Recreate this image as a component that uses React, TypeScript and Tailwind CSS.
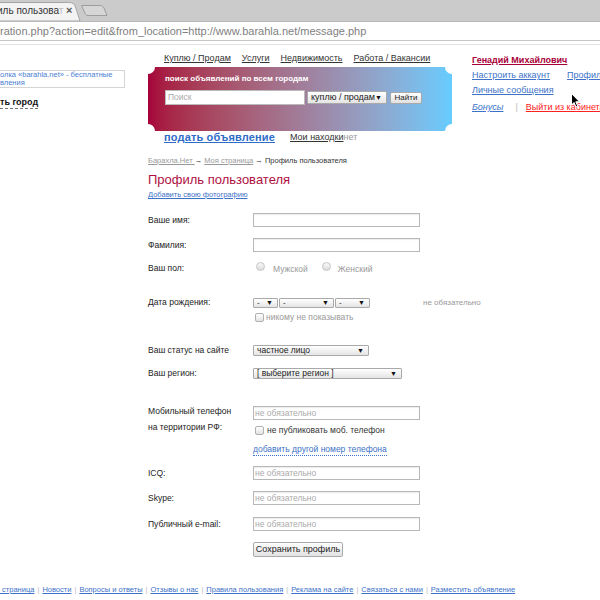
import React from "react";

function Sel({ cls, text }: { cls: string; text: string }) {
  return (
    <div
      className={`flex items-center justify-between whitespace-nowrap border border-[#a9a9a9] rounded-[1px] bg-linear-to-b from-white to-[#e4e4e4] pl-[3px] pr-[4px] leading-none text-[#222] ${cls}`}
    >
      <span>{text}</span>
      <span className="text-[7px] text-[#111]">▼</span>
    </div>
  );
}

function Inp({ ph }: { ph?: string }) {
  return (
    <div className="w-[167px] h-[14px] border border-[#b8b8b8] bg-white shadow-[inset_0_1px_1px_rgba(0,0,0,0.08)] flex items-center pl-[1px] text-[8.5px] leading-none text-[#aaa] whitespace-nowrap">
      {ph}
    </div>
  );
}

function Radio() {
  return <span className="inline-block w-[9px] h-[9px] rounded-full border border-[#c4c4c4] bg-linear-to-b from-[#fafafa] to-[#dcdcdc]" />;
}

function Check() {
  return <span className="inline-block w-[9px] h-[9px] rounded-[2px] border border-[#b0b0b0] bg-linear-to-b from-white to-[#e2e2e2]" />;
}

export default function App() {
  const footer = [
    "Новости",
    "Вопросы и ответы",
    "Отзывы о нас",
    "Правила пользования",
    "Реклама на сайте",
    "Связаться с нами",
    "Разместить объявление",
  ];
  return (
    <div className="relative w-[600px] h-[600px] overflow-hidden bg-white font-['Liberation_Sans',Arial,sans-serif] text-[#222]">
      {/* browser chrome */}
      <div className="relative h-[21px] bg-[#cbcbcb]">
        <svg className="absolute left-0 top-0" width="112" height="21" viewBox="0 0 112 21">
          <path d="M-2 2.5 H69 C73 2.5 74.5 4 75.5 7 L80 21 H-2 Z" fill="#f3f3f3" stroke="#a6a6a6" />
          <path d="M81.5 5.5 H100 C102 5.5 103 6.5 104 8 L107 15.5 H88 C86.5 15.5 85.5 14.5 85 13.5 Z" fill="#d6d6d6" stroke="#9d9d9d" />
        </svg>
        <div className="absolute left-[-3px] top-[5px] text-[10px] leading-[12px] text-[#333] whitespace-nowrap">
          иль пользова<span className="text-[#bbb]">т</span>
        </div>
        <div className="absolute left-[66px] top-[4px] text-[11px] leading-[12px] font-bold text-[#555]">×</div>
      </div>
      <div className="h-[24px] bg-white border-t border-[#b9b9b9] border-b border-b-[#e2e2e2]">
        <div className="h-[19px] border-b border-[#c6c6c6] flex items-center text-[11px] leading-none text-[#808080] whitespace-nowrap">
          ration.php?action=edit&amp;from_location=http://www.barahla.net/message.php
        </div>
      </div>

      {/* header */}
      <div className="flex">
        <div className="w-[148px] shrink-0">
          <div className="mt-[25px] w-[125px] h-[18px] border border-l-0 border-[#d4d4d4] text-[7.5px] leading-[8px] text-[#4a80d4] whitespace-nowrap">
            <div>олка «barahla.net» - бесплатные</div>
            <div>вления</div>
          </div>
          <div className="mt-[6px] inline-block text-[9px] leading-[11px] font-bold text-[#111] border-b border-dashed border-[#777] whitespace-nowrap">
            ть город
          </div>
        </div>

        <div className="w-[312px] shrink-0">
          <div className="mt-[7px] pl-[16px] flex gap-[11px] text-[9px] leading-[12px] text-[#333] whitespace-nowrap">
            <span className="underline">Куплю / Продам</span>
            <span className="underline">Услуги</span>
            <span className="underline">Недвижимость</span>
            <span className="underline">Работа / Вакансии</span>
          </div>
          <div className="relative mt-[3px] w-[304px] h-[64px] bg-linear-to-r from-[#a6003a] to-[#66ccff]">
            <span className="absolute -left-[7px] -top-[7px] w-[14px] h-[14px] rounded-full bg-white" />
            <span className="absolute -right-[7px] -top-[7px] w-[14px] h-[14px] rounded-full bg-white" />
            <span className="absolute -left-[7px] -bottom-[7px] w-[14px] h-[14px] rounded-full bg-white" />
            <span className="absolute -right-[7px] -bottom-[7px] w-[14px] h-[14px] rounded-full bg-white" />
            <div className="pl-[17px] pt-[6px]">
              <div className="text-[8px] leading-[12px] font-bold text-white whitespace-nowrap">поиск объявлений по всем городам</div>
              <div className="mt-[5px] flex items-start">
                <div className="w-[140px] h-[15px] bg-white border border-[#bbb] flex items-center pl-[2px] text-[8.5px] leading-none text-[#aaa]">
                  Поиск
                </div>
                <Sel cls="ml-[2px] mt-[1px] w-[80px] h-[13px] text-[9px]" text="куплю / продам" />
                <div className="ml-[3px] mt-[2px] w-[32px] h-[12px] border border-[#a9a9a9] rounded-[2px] bg-linear-to-b from-white to-[#e0e0e0] flex items-center justify-center text-[8px] leading-none text-[#222]">
                  Найти
                </div>
              </div>
            </div>
          </div>
          <div className="flex items-center h-[12px] pl-[16px] whitespace-nowrap">
            <span className="inline-block w-[126px] text-[11px] tracking-[0.15px] leading-[12px] font-bold text-[#2f6cc8] underline">подать объявление</span>
            <span className="text-[9px] leading-[12px] text-[#333] underline">Мои находки</span>
            <span className="text-[9px] leading-[12px] text-[#999]">нет</span>
          </div>
        </div>

        <div className="ml-[12px] text-[9px] leading-[15px] whitespace-nowrap">
          <div className="mt-[8px] font-bold text-[#a8003a] underline">Генадий Михайлович</div>
          <div className="flex gap-[17px] text-[#3d72c8]">
            <span className="underline">Настроить аккаунт</span>
            <span className="underline">Профиль</span>
          </div>
          <div className="text-[#3d72c8] underline">Личные сообщения</div>
          <div className="mt-[2px] flex items-center">
            <span className="italic text-[#3d72c8] underline">Бонусы</span>
            <span className="ml-[12px] text-[#bbb]">|</span>
            <span className="ml-[8px] text-[#ff2020] underline">Выйти из кабинета</span>
          </div>
        </div>
      </div>

      {/* main */}
      <div className="pl-[148px]">
        <div className="mt-[13px] text-[7.5px] leading-[10px] whitespace-nowrap text-[#333]">
          <span className="text-[#999] underline">Барахла.Нет </span> → <span className="text-[#999] underline">Моя страница</span> → Профиль пользователя
        </div>
        <div className="mt-[6px] text-[13px] leading-[16px] text-[#b0103f]">Профиль пользователя</div>
        <div className="mt-[2px] text-[7.5px] leading-[10px] text-[#3d72c8] underline">Добавить свою фотографию</div>

        <div className="flex flex-col text-[8.5px] text-[#222] whitespace-nowrap">
          <div className="mt-[13px] flex items-center h-[14px]">
            <div className="w-[105px]">Ваше имя:</div>
            <Inp />
          </div>
          <div className="mt-[11px] flex items-center h-[14px]">
            <div className="w-[105px]">Фамилия:</div>
            <Inp />
          </div>
          <div className="mt-[9px] flex items-center h-[14px]">
            <div className="w-[105px]">Ваш пол:</div>
            <div className="flex items-center text-[#999]">
              <span className="ml-[3px]"><Radio /></span>
              <span className="ml-[8px] mt-[2px]">Мужской</span>
              <span className="ml-[14px]"><Radio /></span>
              <span className="ml-[7px] mt-[2px]">Женский</span>
            </div>
          </div>
          <div className="mt-[22px] flex items-center h-[11px]">
            <div className="w-[105px]">Дата рождения:</div>
            <Sel cls="w-[25px] h-[10px] text-[8px]" text="-" />
            <Sel cls="ml-[1px] w-[55px] h-[10px] text-[8px]" text="-" />
            <Sel cls="ml-[1px] w-[35px] h-[10px] text-[8px]" text="-" />
            <span className="ml-[53px] text-[8px] text-[#999]">не обязательно</span>
          </div>
          <div className="mt-[4px] flex items-center h-[10px] pl-[107px] text-[#999]">
            <Check />
            <span className="ml-[2px]">никому не показывать</span>
          </div>
          <div className="mt-[23px] flex items-center h-[11px]">
            <div className="w-[105px]">Ваш статус на сайте</div>
            <Sel cls="w-[116px] h-[11px] text-[8.5px]" text="частное лицо" />
          </div>
          <div className="mt-[12px] flex items-center h-[11px]">
            <div className="w-[105px]">Ваш регион:</div>
            <Sel cls="w-[149px] h-[11px] text-[8.5px]" text="[ выберите регион ]" />
          </div>
          <div className="mt-[27px] flex items-start">
            <div className="w-[105px] -mt-[3px] leading-[16px]">
              <div>Мобильный телефон</div>
              <div>на территории РФ:</div>
            </div>
            <div>
              <Inp ph="не обязательно" />
              <div className="mt-[5px] flex items-center h-[10px] pl-[2px]">
                <Check />
                <span className="ml-[3px] text-[#333]">не публиковать моб. телефон</span>
              </div>
            </div>
          </div>
          <div className="mt-[9px] h-[12px] pl-[105px] flex items-center">
            <span className="text-[#3d72c8] leading-[11px] border-b border-dotted border-[#3d72c8]">добавить другой номер телефона</span>
          </div>
          <div className="mt-[10px] flex items-center h-[14px]">
            <div className="w-[105px]">ICQ:</div>
            <Inp ph="не обязательно" />
          </div>
          <div className="mt-[11px] flex items-center h-[14px]">
            <div className="w-[105px]">Skype:</div>
            <Inp ph="не обязательно" />
          </div>
          <div className="mt-[12px] flex items-center h-[14px]">
            <div className="w-[105px]">Публичный e-mail:</div>
            <Inp ph="не обязательно" />
          </div>
          <div className="mt-[11px] pl-[105px]">
            <div className="w-[90px] h-[15px] border border-[#a9a9a9] rounded-[2px] bg-linear-to-b from-white to-[#e2e2e2] flex items-center justify-center text-[9px] leading-none text-[#222]">
              Сохранить профиль
            </div>
          </div>
        </div>
      </div>

      {/* footer */}
      <div className="mt-[27px] flex items-center h-[12px] text-[7.5px] leading-[12px] whitespace-nowrap">
        <span className="text-[#3d72c8] underline">&nbsp;страница</span>
        {footer.map((f) => (
          <React.Fragment key={f}>
            <span className="mx-[3px] text-[#bbb]">|</span>
            <span className="text-[#3d72c8] underline">{f}</span>
          </React.Fragment>
        ))}
      </div>

      {/* mouse cursor */}
      <svg className="absolute left-[571px] top-[93px]" width="10" height="16" viewBox="0 0 10 16">
        <path d="M0.5 0.5 L0.5 12 L3 9.5 L5 14 L6.8 13.2 L4.8 8.8 L8.5 8.8 Z" fill="#000" stroke="#fff" strokeWidth="1" />
      </svg>
    </div>
  );
}
